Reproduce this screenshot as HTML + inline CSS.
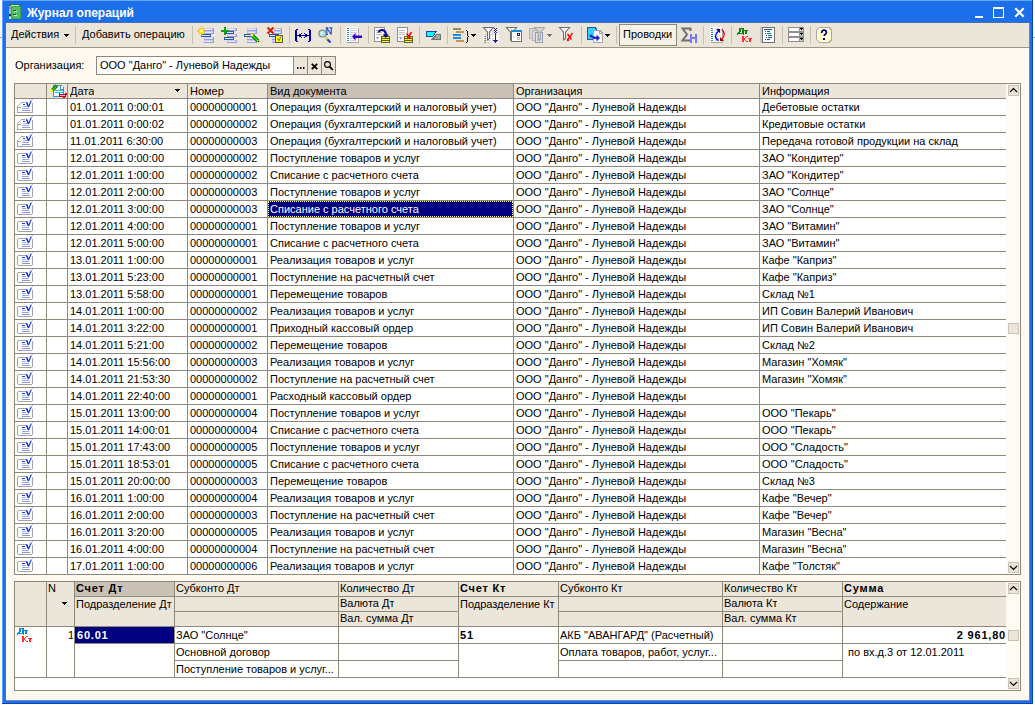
<!DOCTYPE html>
<html><head><meta charset="utf-8"><style>
html,body{margin:0;padding:0;}
body{width:1035px;height:705px;position:relative;overflow:hidden;background:#fdf9ee;font-family:"Liberation Sans", sans-serif;font-size:11px;color:#000;}
body>div,body>svg{position:absolute;}
.t{white-space:nowrap;overflow:hidden;}
.ic{width:16px;height:16px;}
</style></head><body>
<div style="left:2px;top:0px;width:1031px;height:704px;background:#1d6fe9;"></div>
<div style="left:3px;top:0px;width:1029px;height:1px;background:#62aaff;"></div>
<div style="left:2px;top:0px;width:1px;height:704px;background:#5aa0ff;"></div>
<div style="left:1032px;top:0px;width:1px;height:704px;background:#0a3fb5;"></div>
<div style="left:2px;top:703px;width:1031px;height:1px;background:#0a3fb5;"></div>
<div style="left:0px;top:37px;width:2px;height:1px;background:#a0a0a0;"></div>
<div style="left:1033px;top:37px;width:2px;height:1px;background:#a09a88;"></div>
<div style="left:5px;top:22px;width:1025px;height:679px;background:#fffaf0;"></div>
<div style="left:5px;top:22px;width:1025px;height:1px;background:#4a6fb0;"></div>
<div style="left:5px;top:22px;width:1px;height:679px;background:#4a6fb0;"></div>
<div style="left:1029px;top:23px;width:1px;height:678px;background:#6a88c8;"></div>
<div style="left:6px;top:700px;width:1024px;height:1px;background:#6a88c8;"></div>
<div style="left:6px;top:23px;width:1023px;height:24px;background:#ebe5da;"></div>
<div style="left:6px;top:47px;width:1023px;height:1px;background:#9c9684;"></div>
<div class="t" style="left:27px;top:5px;height:16px;line-height:16px;color:#fff;font-weight:bold;font-size:12px;">Журнал операций</div>
<div style="left:975px;top:16px;width:8px;height:2px;background:#ffffff;"></div>
<div style="left:993px;top:7px;width:11px;height:11px;background:transparent;box-sizing:border-box;border:1px solid #fff;border-top-width:2px;"></div>
<svg style="left:1014px;top:7px" width="12" height="12" viewBox="0 0 12 12" shape-rendering="crispEdges"><path d="M1.3 1.3l8.4 8.4M9.7 1.3l-8.4 8.4" stroke="#fff" stroke-width="2.1" shape-rendering="auto"/></svg>
<div class="t" style="left:11px;top:26px;height:16px;line-height:16px;">Действия</div>
<div class="t" style="left:82px;top:26px;height:16px;line-height:16px;">Добавить операцию</div>
<div style="left:75px;top:26px;width:1px;height:18px;background:#c5c1b0;"></div>
<div style="left:192px;top:26px;width:1px;height:18px;background:#c5c1b0;"></div>
<div style="left:289px;top:26px;width:1px;height:18px;background:#c5c1b0;"></div>
<div style="left:340px;top:26px;width:1px;height:18px;background:#c5c1b0;"></div>
<div style="left:368px;top:26px;width:1px;height:18px;background:#c5c1b0;"></div>
<div style="left:419px;top:26px;width:1px;height:18px;background:#c5c1b0;"></div>
<div style="left:447px;top:26px;width:1px;height:18px;background:#c5c1b0;"></div>
<div style="left:581px;top:26px;width:1px;height:18px;background:#c5c1b0;"></div>
<div style="left:616px;top:26px;width:1px;height:18px;background:#c5c1b0;"></div>
<div style="left:703px;top:26px;width:1px;height:18px;background:#c5c1b0;"></div>
<div style="left:731px;top:26px;width:1px;height:18px;background:#c5c1b0;"></div>
<div style="left:782px;top:26px;width:1px;height:18px;background:#c5c1b0;"></div>
<div style="left:810px;top:26px;width:1px;height:18px;background:#c5c1b0;"></div>
<svg style="left:64px;top:34px" width="5" height="3" viewBox="0 0 5 3" shape-rendering="crispEdges"><path d="M0 0h5v1h-1v1h-1v1h-1v-1h-1v-1h-1z" fill="#000"/></svg>
<svg style="left:471px;top:34px" width="5" height="3" viewBox="0 0 5 3" shape-rendering="crispEdges"><path d="M0 0h5v1h-1v1h-1v1h-1v-1h-1v-1h-1z" fill="#000"/></svg>
<svg style="left:547px;top:34px" width="5" height="3" viewBox="0 0 5 3" shape-rendering="crispEdges"><path d="M0 0h5v1h-1v1h-1v1h-1v-1h-1v-1h-1z" fill="#808080"/></svg>
<svg style="left:605px;top:34px" width="5" height="3" viewBox="0 0 5 3" shape-rendering="crispEdges"><path d="M0 0h5v1h-1v1h-1v1h-1v-1h-1v-1h-1z" fill="#000"/></svg>
<svg style="left:196px;top:25px" width="20" height="20" viewBox="0 0 20 20" shape-rendering="crispEdges"><rect x="8" y="3" width="10" height="3" fill="#9c9cd8"/><rect x="8" y="3" width="9" height="2" fill="#c8c8f8"/><rect x="9" y="4" width="7" height="1" fill="#ececff"/><rect x="8" y="6" width="10" height="3" fill="#9c9cd8"/><rect x="8" y="6" width="9" height="2" fill="#c8c8f8"/><rect x="9" y="7" width="7" height="1" fill="#ececff"/><rect x="5" y="9" width="10" height="3" fill="#2c5c9c"/><rect x="6" y="10" width="8" height="1" fill="#dde6f4"/><rect x="8" y="12" width="10" height="3" fill="#9c9cd8"/><rect x="8" y="12" width="9" height="2" fill="#c8c8f8"/><rect x="9" y="13" width="7" height="1" fill="#ececff"/><rect x="8" y="15" width="10" height="3" fill="#9c9cd8"/><rect x="8" y="15" width="9" height="2" fill="#c8c8f8"/><rect x="9" y="16" width="7" height="1" fill="#ececff"/><g shape-rendering="auto"><path d="M5.5 1.5v9M1 6h9M2.8 3.3l5.4 5.4M8.2 3.3l-5.4 5.4" stroke="#ffc000" stroke-width="1.4"/><circle cx="5.5" cy="6" r="2.6" fill="#ffe000"/><circle cx="5.5" cy="6" r="1.2" fill="#fff"/></g></svg>
<svg style="left:219px;top:25px" width="20" height="20" viewBox="0 0 20 20" shape-rendering="crispEdges"><rect x="8" y="3" width="10" height="3" fill="#9c9cd8"/><rect x="8" y="3" width="9" height="2" fill="#c8c8f8"/><rect x="9" y="4" width="7" height="1" fill="#ececff"/><rect x="7" y="6" width="8" height="3" fill="#2c5c9c"/><rect x="8" y="7" width="6" height="1" fill="#dde6f4"/><rect x="8" y="9" width="10" height="3" fill="#9c9cd8"/><rect x="8" y="9" width="9" height="2" fill="#c8c8f8"/><rect x="9" y="10" width="7" height="1" fill="#ececff"/><rect x="5" y="12" width="10" height="3" fill="#2c5c9c"/><rect x="6" y="13" width="8" height="1" fill="#dde6f4"/><rect x="8" y="15" width="10" height="3" fill="#9c9cd8"/><rect x="8" y="15" width="9" height="2" fill="#c8c8f8"/><rect x="9" y="16" width="7" height="1" fill="#ececff"/><rect x="5" y="2" width="2" height="8" fill="#10a010"/><rect x="2" y="5" width="8" height="2" fill="#10a010"/></svg>
<svg style="left:242px;top:25px" width="20" height="20" viewBox="0 0 20 20" shape-rendering="crispEdges"><rect x="5" y="3" width="10" height="3" fill="#9c9cd8"/><rect x="5" y="3" width="9" height="2" fill="#c8c8f8"/><rect x="6" y="4" width="7" height="1" fill="#ececff"/><rect x="5" y="6" width="10" height="3" fill="#9c9cd8"/><rect x="5" y="6" width="9" height="2" fill="#c8c8f8"/><rect x="6" y="7" width="7" height="1" fill="#ececff"/><rect x="2" y="9" width="8" height="3" fill="#2c5c9c"/><rect x="3" y="10" width="6" height="1" fill="#dde6f4"/><rect x="5" y="12" width="10" height="3" fill="#9c9cd8"/><rect x="5" y="12" width="9" height="2" fill="#c8c8f8"/><rect x="6" y="13" width="7" height="1" fill="#ececff"/><rect x="5" y="15" width="10" height="3" fill="#9c9cd8"/><rect x="5" y="15" width="9" height="2" fill="#c8c8f8"/><rect x="6" y="16" width="7" height="1" fill="#ececff"/><g shape-rendering="auto"><path d="M10 10L16.5 16.5" stroke="#006000" stroke-width="3.4"/><path d="M10 10L16.5 16.5" stroke="#20e020" stroke-width="1.6"/><circle cx="10" cy="10" r="1.5" fill="#ffff00"/><circle cx="16.5" cy="16.5" r="1.6" fill="#ffff00"/><circle cx="16.4" cy="16.4" r="0.7" fill="#000"/></g></svg>
<svg style="left:265px;top:25px" width="20" height="20" viewBox="0 0 20 20" shape-rendering="crispEdges"><rect x="9" y="3" width="8" height="3" fill="#9c9cd8"/><rect x="9" y="3" width="7" height="2" fill="#c8c8f8"/><rect x="10" y="4" width="5" height="1" fill="#ececff"/><rect x="9" y="6" width="8" height="3" fill="#9c9cd8"/><rect x="9" y="6" width="7" height="2" fill="#c8c8f8"/><rect x="10" y="7" width="5" height="1" fill="#ececff"/><rect x="4" y="9" width="10" height="3" fill="#2c5c9c"/><rect x="5" y="10" width="8" height="1" fill="#dde6f4"/><rect x="7" y="12" width="4" height="3" fill="#9c9cd8"/><rect x="7" y="12" width="3" height="2" fill="#c8c8f8"/><rect x="8" y="13" width="1" height="1" fill="#ececff"/><rect x="7" y="15" width="4" height="3" fill="#9c9cd8"/><rect x="7" y="15" width="3" height="2" fill="#c8c8f8"/><rect x="8" y="16" width="1" height="1" fill="#ececff"/><rect x="10" y="10" width="8" height="8" fill="#5c5c28"/><rect x="11" y="11" width="6" height="6" fill="#ffff00"/><g shape-rendering="auto"><path d="M12.5 13.5l1.5 2 2-4" stroke="#8c8c40" stroke-width="1.2" fill="none"/><path d="M2.5 2.5l6 6M8.5 2.5l-6 6" stroke="#d82000" stroke-width="2"/></g></svg>
<svg style="left:293px;top:25px" width="20" height="20" viewBox="0 0 20 20" shape-rendering="crispEdges"><g fill="#0000a0"><rect x="2" y="5" width="2" height="11" fill="#0000a0"/><rect x="3" y="4" width="2" height="1" fill="#0000a0"/><rect x="3" y="16" width="2" height="1" fill="#0000a0"/><rect x="16" y="5" width="2" height="11" fill="#0000a0"/><rect x="15" y="4" width="2" height="1" fill="#0000a0"/><rect x="15" y="16" width="2" height="1" fill="#0000a0"/><rect x="4" y="10" width="12" height="1" fill="#0000a0"/><rect x="6" y="9" width="2" height="3" fill="#0000a0"/><rect x="12" y="9" width="2" height="3" fill="#0000a0"/><rect x="8" y="8" width="1" height="1" fill="#0000a0"/><rect x="11" y="8" width="1" height="1" fill="#0000a0"/><rect x="8" y="12" width="1" height="1" fill="#0000a0"/><rect x="11" y="12" width="1" height="1" fill="#0000a0"/></g></svg>
<svg style="left:316px;top:25px" width="20" height="20" viewBox="0 0 20 20" shape-rendering="crispEdges"><g shape-rendering="auto"><path d="M9.5 2.8h3M13.5 2.8h3M10.8 3v6.5M15.2 3v6.5M10.8 3l4.4 6.5M9.5 9.5h2.6" stroke="#2050d0" stroke-width="1.2" fill="none"/><path d="M9.5 12.5l5 5" stroke="#c8c860" stroke-width="2"/><path d="M11.5 14.5l3 3" stroke="#2040c0" stroke-width="2"/><circle cx="6.5" cy="8.5" r="3.5" fill="#a8e8f0" stroke="#808080" stroke-width="1.2"/><circle cx="5.5" cy="8" r="1.2" fill="#f0f0f0"/></g></svg>
<svg style="left:344px;top:25px" width="20" height="20" viewBox="0 0 20 20" shape-rendering="crispEdges"><rect x="3" y="3" width="12" height="15" fill="#a8a8a8"/><rect x="2" y="2" width="12" height="15" fill="#ffffff"/><rect x="3" y="3" width="2" height="1" fill="#2090d0"/><rect x="6" y="3" width="7" height="1" fill="#d0d0d0"/><rect x="3" y="5" width="2" height="1" fill="#2090d0"/><rect x="6" y="5" width="7" height="1" fill="#d0d0d0"/><rect x="3" y="7" width="2" height="1" fill="#2090d0"/><rect x="6" y="7" width="7" height="1" fill="#d0d0d0"/><rect x="3" y="9" width="2" height="1" fill="#2090d0"/><rect x="6" y="9" width="7" height="1" fill="#d0d0d0"/><rect x="3" y="11" width="2" height="1" fill="#2090d0"/><rect x="6" y="11" width="7" height="1" fill="#d0d0d0"/><rect x="3" y="13" width="2" height="1" fill="#2090d0"/><rect x="6" y="13" width="7" height="1" fill="#d0d0d0"/><rect x="3" y="15" width="2" height="1" fill="#2090d0"/><rect x="6" y="15" width="7" height="1" fill="#d0d0d0"/><path d="M8 11.5L11.5 8v2.5h6.5v2.5h-6.5v2.5z" fill="#3000d0" shape-rendering="auto"/></svg>
<svg style="left:372px;top:25px" width="20" height="20" viewBox="0 0 20 20" shape-rendering="crispEdges"><rect x="2" y="2" width="11" height="15" fill="#909090"/><rect x="3" y="3" width="9" height="13" fill="#ffffff"/><rect x="4" y="5" width="6" height="1" fill="#c0c0c0"/><rect x="4" y="7" width="6" height="1" fill="#c0c0c0"/><rect x="4" y="9" width="6" height="1" fill="#c0c0c0"/><path d="M4 12h3l-1.5 2.5z" fill="#8888ff" shape-rendering="auto"/><rect x="9" y="11" width="9" height="7" fill="#606020"/><rect x="10" y="12" width="7" height="1" fill="#ffff20"/><rect x="10" y="14" width="7" height="1" fill="#ffff20"/><rect x="10" y="16" width="7" height="1" fill="#ffff20"/><g shape-rendering="auto"><path d="M6.5 7.5c1-3 6-4 7.5 1v2" stroke="#0000a0" stroke-width="1.8" fill="none"/><path d="M10.5 9.5h6.5l-3.25 3.5z" fill="#0000a0"/></g></svg>
<svg style="left:395px;top:25px" width="20" height="20" viewBox="0 0 20 20" shape-rendering="crispEdges"><rect x="2" y="2" width="11" height="15" fill="#909090"/><rect x="3" y="3" width="9" height="13" fill="#ffffff"/><rect x="4" y="5" width="6" height="1" fill="#c0c0c0"/><rect x="4" y="7" width="6" height="1" fill="#c0c0c0"/><rect x="4" y="9" width="6" height="1" fill="#c0c0c0"/><path d="M4 12h3l-1.5 2.5z" fill="#8888ff" shape-rendering="auto"/><rect x="9" y="11" width="9" height="7" fill="#606020"/><rect x="10" y="12" width="7" height="1" fill="#ffff20"/><rect x="10" y="14" width="7" height="1" fill="#ffff20"/><rect x="10" y="16" width="7" height="1" fill="#ffff20"/><g shape-rendering="auto"><path d="M11.5 8.5l4 5M16.5 7l-4.5 7" stroke="#ff0000" stroke-width="1.5" fill="none"/></g></svg>
<svg style="left:423px;top:25px" width="20" height="20" viewBox="0 0 20 20" shape-rendering="crispEdges"><path d="M3 6h11l-4 6h-7z" fill="#1c4c9c"/><path d="M4 7h8.3l-2.7 4h-5.6z" fill="#00ffff"/><path d="M13 9h5v6h-10z" fill="#707070"/><path d="M13.7 10h3.3v4h-6z" fill="#a8a8a8"/></svg>
<svg style="left:451px;top:25px" width="28" height="20" viewBox="0 0 28 20" shape-rendering="crispEdges"><rect x="2" y="3" width="8" height="2" fill="#8c9060"/><rect x="5" y="6" width="8" height="2" fill="#d09050"/><rect x="2" y="9" width="8" height="2" fill="#2090d8"/><rect x="2" y="12" width="8" height="2" fill="#2090d8"/><rect x="5" y="15" width="8" height="2" fill="#d09050"/><rect x="16" y="6" width="1" height="5" fill="#0000b0"/><rect x="16" y="12" width="1" height="5" fill="#0000b0"/><rect x="15" y="5" width="1" height="1" fill="#000"/><rect x="17" y="11" width="1" height="1" fill="#000"/><rect x="15" y="17" width="1" height="1" fill="#000"/><path d="M20 9h5v1h-1v1h-1v1h-1v-1h-1v-1h-1z" fill="#000"/></svg>
<svg style="left:481px;top:25px" width="20" height="20" viewBox="0 0 20 20" shape-rendering="crispEdges"><rect x="2" y="8" width="16" height="10" fill="#ffffff"/><rect x="2" y="9" width="15" height="1" fill="#d0d0d0"/><rect x="4" y="8" width="1" height="10" fill="#d8d8d8"/><rect x="11" y="8" width="1" height="10" fill="#d8d8d8"/><rect x="3" y="11" width="2" height="1" fill="#808080"/><rect x="6" y="11" width="4" height="1" fill="#d0d0d0"/><rect x="3" y="13" width="2" height="1" fill="#808080"/><rect x="6" y="13" width="4" height="1" fill="#d0d0d0"/><rect x="3" y="15" width="2" height="1" fill="#808080"/><rect x="6" y="15" width="4" height="1" fill="#d0d0d0"/><rect x="3" y="17" width="2" height="1" fill="#808080"/><rect x="6" y="17" width="4" height="1" fill="#d0d0d0"/><g shape-rendering="auto"><path d="M2.5 2.5h10l-4 4.5v6.5l-2 1.5v-8z" fill="#ffffff" stroke="#707070" stroke-width="1.1"/></g><rect x="13" y="3" width="1" height="1" fill="#2020a0"/><rect x="15" y="3" width="1" height="1" fill="#2020a0"/><rect x="14" y="4" width="1" height="1" fill="#2020a0"/><rect x="13" y="5" width="1" height="1" fill="#2020a0"/><rect x="15" y="5" width="1" height="1" fill="#2020a0"/><rect x="14" y="6" width="1" height="1" fill="#2020a0"/><rect x="13" y="7" width="1" height="1" fill="#2020a0"/><rect x="15" y="7" width="1" height="1" fill="#2020a0"/><rect x="14" y="8" width="1" height="8" fill="#2020a0"/><path d="M12 15h5l-2.5 3z" fill="#2020a0"/></svg>
<svg style="left:504px;top:25px" width="20" height="20" viewBox="0 0 20 20" shape-rendering="crispEdges"><g shape-rendering="auto"><path d="M2.5 2.5h10l-4 4.5v6.5l-2 1.5v-8z" fill="#ffffff" stroke="#707070" stroke-width="1.1"/></g><rect x="7" y="5" width="11" height="12" fill="#707070"/><rect x="8" y="7" width="9" height="9" fill="#ffffff"/><rect x="8" y="5" width="10" height="2" fill="#1890d0"/><rect x="13" y="8" width="3" height="3" fill="#1c1c90"/><rect x="14" y="9" width="1" height="1" fill="#fff"/><rect x="13" y="12" width="3" height="3" fill="#d0ccc0"/><rect x="14" y="13" width="1" height="1" fill="#fff"/><rect x="9" y="8" width="2" height="1" fill="#e0d8c8"/><rect x="9" y="12" width="2" height="1" fill="#e0d8c8"/></svg>
<svg style="left:527px;top:25px" width="28" height="20" viewBox="0 0 28 20" shape-rendering="crispEdges"><rect x="2" y="3" width="7" height="11" fill="#b0b0b0"/><rect x="3" y="4" width="5" height="9" fill="#d8d8d8"/><rect x="5" y="5" width="7" height="11" fill="#b8b8b8"/><rect x="6" y="6" width="5" height="9" fill="#dcdcdc"/><rect x="8" y="7" width="8" height="11" fill="#9898b8"/><rect x="9" y="8" width="6" height="9" fill="#e0e0e0"/><rect x="10" y="10" width="4" height="1" fill="#a0c8c0"/><rect x="10" y="12" width="4" height="1" fill="#a0c8c0"/><rect x="10" y="14" width="4" height="1" fill="#a0c8c0"/><rect x="10" y="15" width="4" height="1" fill="#a0c8c0"/><g shape-rendering="auto"><path d="M7.5 2.5h10l-4 4.5v6.5l-2 1.5v-8z" fill="#d8d8d8" stroke="#a8a8a8" stroke-width="1.1"/></g><path d="M20 9h5v1h-1v1h-1v1h-1v-1h-1v-1h-1z" fill="#707070"/></svg>
<svg style="left:557px;top:25px" width="20" height="20" viewBox="0 0 20 20" shape-rendering="crispEdges"><g shape-rendering="auto"><path d="M2.5 2.5h10l-4 4.5v6.5l-2 1.5v-8z" fill="#ffffff" stroke="#707070" stroke-width="1.1"/></g><g shape-rendering="auto"><path d="M10.5 9l4 5.5M15.5 8l-5 7" stroke="#ff0000" stroke-width="1.3"/><circle cx="11" cy="15" r="1.2" fill="#ff0000"/></g></svg>
<svg style="left:585px;top:25px" width="28" height="20" viewBox="0 0 28 20" shape-rendering="crispEdges"><path d="M2 2h8l2 2v11h-10z" fill="#1c5c9c"/><path d="M3 3h6.5l1.5 1.5v9.5h-8z" fill="#30d0f8"/><path d="M8 5h7l3 3v10h-10z" fill="#a8a8a8"/><path d="M9 6h5.5l2.5 2.5v8.5h-8z" fill="#ffffff"/><path d="M14.5 6v2.5h2.5" fill="none" stroke="#a8a8a8"/><g shape-rendering="auto"><path d="M5 10c1.5 2 3 3 7 3" stroke="#2020d0" stroke-width="2.2" fill="none"/><path d="M11.5 9.5l3.5 3.5-3.5 3.5z" fill="#2020d0"/></g><path d="M20 9h5v1h-1v1h-1v1h-1v-1h-1v-1h-1z" fill="#000"/></svg>
<svg style="left:680px;top:25px" width="20" height="20" viewBox="0 0 20 20" shape-rendering="crispEdges"><g shape-rendering="auto"><path d="M10.5 6v-2.5h-8l4.5 6-4.5 6h8" stroke="#707070" stroke-width="2" fill="none"/></g><rect x="10" y="9" width="2" height="9" fill="#7878ff"/><rect x="15" y="9" width="2" height="9" fill="#7878ff"/><rect x="12" y="12" width="3" height="2" fill="#7878ff"/></svg>
<svg style="left:708px;top:25px" width="20" height="20" viewBox="0 0 20 20" shape-rendering="crispEdges"><rect x="3" y="3" width="12" height="15" fill="#a8a8a8"/><rect x="2" y="2" width="12" height="15" fill="#ffffff"/><rect x="3" y="3" width="2" height="1" fill="#2090d0"/><rect x="6" y="3" width="7" height="1" fill="#e0e0e0"/><rect x="3" y="5" width="2" height="1" fill="#2090d0"/><rect x="6" y="5" width="7" height="1" fill="#e0e0e0"/><rect x="3" y="7" width="2" height="1" fill="#2090d0"/><rect x="6" y="7" width="7" height="1" fill="#e0e0e0"/><rect x="3" y="9" width="2" height="1" fill="#2090d0"/><rect x="6" y="9" width="7" height="1" fill="#e0e0e0"/><rect x="3" y="11" width="2" height="1" fill="#2090d0"/><rect x="6" y="11" width="7" height="1" fill="#e0e0e0"/><rect x="3" y="13" width="2" height="1" fill="#2090d0"/><rect x="6" y="13" width="7" height="1" fill="#e0e0e0"/><rect x="3" y="15" width="2" height="1" fill="#2090d0"/><rect x="6" y="15" width="7" height="1" fill="#e0e0e0"/><g shape-rendering="auto"><path d="M10.5 15.5c-4-2-4-6 0-9.5" stroke="#0000ff" stroke-width="1.4" fill="none"/><path d="M8 4h4v4z" fill="#000080"/><path d="M13.5 4.5c3.5 2 3.5 7 0 10" stroke="#ff0000" stroke-width="1.3" fill="none"/><path d="M12 12v4h4z" fill="#a00000"/></g></svg>
<svg style="left:734px;top:25px" width="20" height="20" viewBox="0 0 20 20" shape-rendering="crispEdges"><rect x="5" y="3" width="5" height="1" fill="#108010"/><rect x="5" y="3" width="2" height="4" fill="#108010"/><rect x="4" y="7" width="2" height="1" fill="#108010"/><rect x="8" y="3" width="2" height="5" fill="#108010"/><rect x="3" y="8" width="7" height="1" fill="#108010"/><rect x="3" y="9" width="1" height="1" fill="#108010"/><rect x="9" y="9" width="1" height="1" fill="#108010"/><rect x="10" y="5" width="4" height="1" fill="#108010"/><rect x="11" y="5" width="2" height="4" fill="#108010"/><rect x="8" y="11" width="2" height="6" fill="#ff3030"/><rect x="12" y="11" width="2" height="1" fill="#ff3030"/><rect x="11" y="12" width="1" height="1" fill="#ff3030"/><rect x="10" y="13" width="1" height="2" fill="#ff3030"/><rect x="11" y="15" width="1" height="1" fill="#ff3030"/><rect x="12" y="16" width="2" height="1" fill="#ff3030"/><rect x="14" y="13" width="4" height="1" fill="#ff3030"/><rect x="15" y="13" width="2" height="4" fill="#ff3030"/></svg>
<svg style="left:758px;top:25px" width="20" height="20" viewBox="0 0 20 20" shape-rendering="crispEdges"><rect x="2" y="2" width="2" height="16" fill="#c8c8c8"/><rect x="4" y="2" width="13" height="16" fill="#707070"/><rect x="5" y="3" width="11" height="14" fill="#ffffff"/><rect x="6" y="4" width="8" height="1" fill="#105c90"/><rect x="7" y="6" width="1" height="1" fill="#105c90"/><rect x="9" y="6" width="3" height="1" fill="#105c90"/><rect x="7" y="8" width="1" height="1" fill="#105c90"/><rect x="9" y="8" width="4" height="1" fill="#105c90"/><rect x="8" y="10" width="1" height="1" fill="#105c90"/><rect x="10" y="10" width="4" height="1" fill="#105c90"/><rect x="8" y="12" width="1" height="1" fill="#105c90"/><rect x="10" y="12" width="4" height="1" fill="#105c90"/><rect x="7" y="14" width="1" height="1" fill="#105c90"/><rect x="9" y="14" width="3" height="1" fill="#105c90"/></svg>
<svg style="left:786px;top:25px" width="20" height="20" viewBox="0 0 20 20" shape-rendering="crispEdges"><rect x="2" y="2" width="16" height="5" fill="#909090"/><rect x="3" y="3" width="10" height="3" fill="#ffffff"/><rect x="14" y="3" width="3" height="3" fill="#c8c8c8"/><rect x="14" y="3" width="3" height="1" fill="#000"/><rect x="15" y="4" width="1" height="1" fill="#000"/><rect x="2" y="7" width="16" height="5" fill="#909090"/><rect x="3" y="8" width="10" height="3" fill="#ffffff"/><rect x="14" y="8" width="3" height="3" fill="#c8c8c8"/><rect x="14" y="8" width="3" height="1" fill="#000"/><rect x="15" y="9" width="1" height="1" fill="#000"/><rect x="2" y="12" width="16" height="5" fill="#909090"/><rect x="3" y="13" width="10" height="3" fill="#ffffff"/><rect x="14" y="13" width="3" height="3" fill="#c8c8c8"/><rect x="14" y="13" width="3" height="1" fill="#000"/><rect x="15" y="14" width="1" height="1" fill="#000"/></svg>
<svg style="left:814px;top:25px" width="20" height="20" viewBox="0 0 20 20" shape-rendering="crispEdges"><path d="M5 2h10l3 3v10l-3 3h-10l-3-3v-10z" fill="#a8a8a8"/><path d="M5.5 3h9l2.5 2.5v9l-2.5 2.5h-9l-2.5-2.5v-9z" fill="#ffffd0"/><g shape-rendering="auto"><path d="M7.6 8c0-2 1-2.8 2.4-2.8s2.4 0.8 2.4 2.2c0 1.6-2.2 1.8-2.2 3.6" stroke="#000090" stroke-width="1.7" fill="none"/></g><rect x="9" y="13" width="2" height="2" fill="#000090"/></svg>
<svg style="left:6px;top:2px" width="18" height="18" viewBox="0 0 18 18" shape-rendering="crispEdges"><rect x="3" y="2" width="11" height="15" fill="#1c7a34"/><rect x="5" y="3" width="8" height="1" fill="#c8ecc8"/><rect x="5" y="4" width="10" height="13" fill="#3aa650"/><rect x="6" y="5" width="8" height="11" fill="#52c068"/><rect x="3" y="4" width="2" height="13" fill="#8cc8a0"/><rect x="3" y="5" width="2" height="2" fill="#c08050"/><rect x="3" y="12" width="2" height="2" fill="#103c18"/><rect x="3" y="15" width="2" height="2" fill="#d8f0c8"/><rect x="7" y="8" width="3" height="1" fill="#1c5c2c"/><rect x="8" y="9" width="3" height="1" fill="#d8f8d8"/><rect x="7" y="12" width="3" height="1" fill="#1c5c2c"/><rect x="8" y="13" width="3" height="1" fill="#d8f8d8"/></svg>
<div style="left:619px;top:24px;width:58px;height:22px;background:#f5f2e8;box-sizing:border-box;border:1px solid #8f8a78;"></div>
<div class="t" style="left:623px;top:26px;height:16px;line-height:16px;">Проводки</div>
<div class="t" style="left:15px;top:57px;height:16px;line-height:16px;">Организация:</div>
<div style="left:96px;top:56px;width:240px;height:19px;background:#ffffff;box-sizing:border-box;border:1px solid #8f8a78;"></div>
<div class="t" style="left:100px;top:57px;height:16px;line-height:16px;">ООО &quot;Данго&quot; - Луневой Надежды</div>
<div style="left:293px;top:56px;width:15px;height:19px;background:#ebe5da;box-sizing:border-box;border:1px solid #8f8a78;"></div>
<div style="left:307px;top:56px;width:15px;height:19px;background:#ebe5da;box-sizing:border-box;border:1px solid #8f8a78;"></div>
<div style="left:321px;top:56px;width:15px;height:19px;background:#ebe5da;box-sizing:border-box;border:1px solid #8f8a78;"></div>
<div style="left:297px;top:67px;width:1px;height:2px;background:#000;"></div>
<div style="left:300px;top:67px;width:1px;height:2px;background:#000;"></div>
<div style="left:303px;top:67px;width:1px;height:2px;background:#000;"></div>
<div style="left:298px;top:67px;width:1px;height:2px;background:#888;"></div>
<div style="left:301px;top:67px;width:1px;height:2px;background:#888;"></div>
<div style="left:304px;top:67px;width:1px;height:2px;background:#888;"></div>
<svg style="left:307px;top:56px" width="14" height="19" viewBox="0 0 14 19" shape-rendering="crispEdges"><path d="M4.8 7.8l5.4 5.4M10.2 7.8l-5.4 5.4" stroke="#000" stroke-width="1.9" shape-rendering="auto"/></svg>
<svg style="left:321px;top:56px" width="15" height="19" viewBox="0 0 15 19" shape-rendering="crispEdges"><g shape-rendering="auto"><circle cx="6.5" cy="8.5" r="2.9" fill="none" stroke="#000" stroke-width="1.1"/><path d="M8.6 10.6l3.2 3.2" stroke="#000" stroke-width="1.9"/></g></svg>
<div style="left:14px;top:83px;width:1007px;height:492px;background:#ffffff;"></div>
<div style="left:15px;top:84px;width:991px;height:14px;background:#ebe5da;"></div>
<div style="left:268px;top:84px;width:245px;height:14px;background:#c9c1b5;"></div>
<div style="left:1006px;top:84px;width:14px;height:490px;background:#fdfbf3;"></div>
<div style="left:14px;top:98px;width:992px;height:1px;background:#8f897b;"></div>
<div style="left:14px;top:115px;width:992px;height:1px;background:#8f897b;"></div>
<div style="left:14px;top:132px;width:992px;height:1px;background:#8f897b;"></div>
<div style="left:14px;top:149px;width:992px;height:1px;background:#8f897b;"></div>
<div style="left:14px;top:166px;width:992px;height:1px;background:#8f897b;"></div>
<div style="left:14px;top:183px;width:992px;height:1px;background:#8f897b;"></div>
<div style="left:14px;top:200px;width:992px;height:1px;background:#8f897b;"></div>
<div style="left:14px;top:217px;width:992px;height:1px;background:#8f897b;"></div>
<div style="left:14px;top:234px;width:992px;height:1px;background:#8f897b;"></div>
<div style="left:14px;top:251px;width:992px;height:1px;background:#8f897b;"></div>
<div style="left:14px;top:268px;width:992px;height:1px;background:#8f897b;"></div>
<div style="left:14px;top:285px;width:992px;height:1px;background:#8f897b;"></div>
<div style="left:14px;top:302px;width:992px;height:1px;background:#8f897b;"></div>
<div style="left:14px;top:319px;width:992px;height:1px;background:#8f897b;"></div>
<div style="left:14px;top:336px;width:992px;height:1px;background:#8f897b;"></div>
<div style="left:14px;top:353px;width:992px;height:1px;background:#8f897b;"></div>
<div style="left:14px;top:370px;width:992px;height:1px;background:#8f897b;"></div>
<div style="left:14px;top:387px;width:992px;height:1px;background:#8f897b;"></div>
<div style="left:14px;top:404px;width:992px;height:1px;background:#8f897b;"></div>
<div style="left:14px;top:421px;width:992px;height:1px;background:#8f897b;"></div>
<div style="left:14px;top:438px;width:992px;height:1px;background:#8f897b;"></div>
<div style="left:14px;top:455px;width:992px;height:1px;background:#8f897b;"></div>
<div style="left:14px;top:472px;width:992px;height:1px;background:#8f897b;"></div>
<div style="left:14px;top:489px;width:992px;height:1px;background:#8f897b;"></div>
<div style="left:14px;top:506px;width:992px;height:1px;background:#8f897b;"></div>
<div style="left:14px;top:523px;width:992px;height:1px;background:#8f897b;"></div>
<div style="left:14px;top:540px;width:992px;height:1px;background:#8f897b;"></div>
<div style="left:14px;top:557px;width:992px;height:1px;background:#8f897b;"></div>
<div style="left:46px;top:84px;width:1px;height:490px;background:#8f897b;"></div>
<div style="left:67px;top:84px;width:1px;height:490px;background:#8f897b;"></div>
<div style="left:187px;top:84px;width:1px;height:490px;background:#8f897b;"></div>
<div style="left:267px;top:84px;width:1px;height:490px;background:#8f897b;"></div>
<div style="left:513px;top:84px;width:1px;height:490px;background:#8f897b;"></div>
<div style="left:759px;top:84px;width:1px;height:490px;background:#8f897b;"></div>
<div style="left:14px;top:83px;width:1007px;height:1px;background:#8f897b;"></div>
<div style="left:14px;top:574px;width:1007px;height:1px;background:#8f897b;"></div>
<div style="left:14px;top:83px;width:1px;height:492px;background:#8f897b;"></div>
<div style="left:1020px;top:83px;width:1px;height:492px;background:#8f897b;"></div>
<svg style="left:46px;top:83px" width="22" height="16" viewBox="0 0 22 16" shape-rendering="crispEdges"><path d="M7 2h8l3 3v9h-11z" fill="#3890d0"/><path d="M8 3h6.5l2.5 2.5v7.5h-9z" fill="#ffffff"/><path d="M14 2v4h4" fill="none" stroke="#3890d0"/><rect x="15" y="3" width="2" height="2" fill="#ffffff"/><rect x="9" y="7" width="8" height="1" fill="#10c8f8"/><rect x="9" y="9" width="8" height="1" fill="#10c8f8"/><g shape-rendering="auto"><path d="M6 7.5L11 2.5" stroke="#108010" stroke-width="3.4"/><path d="M6.5 7L10.5 3" stroke="#70e070" stroke-width="0.9"/><path d="M3.5 9.5l1.5-4 2.5 2.5z" fill="#f0f000"/></g><rect x="13" y="11" width="7" height="3" fill="#d00000"/><rect x="14" y="12" width="5" height="1" fill="#ffb0e8"/><rect x="13" y="10" width="1" height="1" fill="#d00000"/><rect x="19" y="10" width="2" height="2" fill="#d00000"/><rect x="17" y="14" width="2" height="1" fill="#d00000"/></svg>
<div class="t" style="left:70px;top:83px;height:16px;line-height:16px;">Дата</div>
<svg style="left:175px;top:89px" width="5" height="3" viewBox="0 0 5 3" shape-rendering="crispEdges"><path d="M0 0h5v1h-1v1h-1v1h-1v-1h-1v-1h-1z" fill="#000"/></svg>
<div class="t" style="left:190px;top:83px;height:16px;line-height:16px;">Номер</div>
<div class="t" style="left:270px;top:83px;height:16px;line-height:16px;">Вид документа</div>
<div class="t" style="left:516px;top:83px;height:16px;line-height:16px;">Организация</div>
<div class="t" style="left:762px;top:83px;height:16px;line-height:16px;">Информация</div>
<svg style="left:15px;top:99px" width="20" height="16" viewBox="0 0 20 16" shape-rendering="crispEdges"><g fill="none" stroke-width="1"><path d="M6 3.5h4M2.5 7v6.5h15v-9.5M2 8.5h4" stroke="#a4a4a4"/><path d="M2.5 7.5L6.5 3.5" stroke="#b4b4b4" shape-rendering="auto"/><rect x="8" y="5" width="2" height="1" fill="#1838e0"/><rect x="8" y="7" width="4" height="1" fill="#98a8e8"/><rect x="7" y="9" width="7" height="1" fill="#98a8e8"/><rect x="7" y="11" width="8" height="1" fill="#8898e0"/><path d="M11.5 3.3L13.5 8" stroke="#0028e0" stroke-width="1.5" shape-rendering="auto"/><path d="M13.5 8L16.2 1.8" stroke="#1030e0" stroke-width="1.1" shape-rendering="auto"/><path d="M16.2 1.8L17.8 0" stroke="#a8a8ff" shape-rendering="auto"/></g></svg>
<div class="t" style="left:70px;top:99px;width:116px;height:16px;line-height:16px;">01.01.2011 0:00:01</div>
<div class="t" style="left:190px;top:99px;width:76px;height:16px;line-height:16px;">00000000001</div>
<div class="t" style="left:270px;top:99px;width:242px;height:16px;line-height:16px;">Операция (бухгалтерский и налоговый учет)</div>
<div class="t" style="left:516px;top:99px;width:242px;height:16px;line-height:16px;">ООО &quot;Данго&quot; - Луневой Надежды</div>
<div class="t" style="left:762px;top:99px;width:243px;height:16px;line-height:16px;">Дебетовые остатки</div>
<svg style="left:15px;top:116px" width="20" height="16" viewBox="0 0 20 16" shape-rendering="crispEdges"><g fill="none" stroke-width="1"><path d="M6 3.5h4M2.5 7v6.5h15v-9.5M2 8.5h4" stroke="#a4a4a4"/><path d="M2.5 7.5L6.5 3.5" stroke="#b4b4b4" shape-rendering="auto"/><rect x="8" y="5" width="2" height="1" fill="#1838e0"/><rect x="8" y="7" width="4" height="1" fill="#98a8e8"/><rect x="7" y="9" width="7" height="1" fill="#98a8e8"/><rect x="7" y="11" width="8" height="1" fill="#8898e0"/><path d="M11.5 3.3L13.5 8" stroke="#0028e0" stroke-width="1.5" shape-rendering="auto"/><path d="M13.5 8L16.2 1.8" stroke="#1030e0" stroke-width="1.1" shape-rendering="auto"/><path d="M16.2 1.8L17.8 0" stroke="#a8a8ff" shape-rendering="auto"/></g></svg>
<div class="t" style="left:70px;top:116px;width:116px;height:16px;line-height:16px;">01.01.2011 0:00:02</div>
<div class="t" style="left:190px;top:116px;width:76px;height:16px;line-height:16px;">00000000002</div>
<div class="t" style="left:270px;top:116px;width:242px;height:16px;line-height:16px;">Операция (бухгалтерский и налоговый учет)</div>
<div class="t" style="left:516px;top:116px;width:242px;height:16px;line-height:16px;">ООО &quot;Данго&quot; - Луневой Надежды</div>
<div class="t" style="left:762px;top:116px;width:243px;height:16px;line-height:16px;">Кредитовые остатки</div>
<svg style="left:15px;top:133px" width="20" height="16" viewBox="0 0 20 16" shape-rendering="crispEdges"><g fill="none" stroke-width="1"><path d="M6 3.5h4M2.5 7v6.5h15v-9.5M2 8.5h4" stroke="#a4a4a4"/><path d="M2.5 7.5L6.5 3.5" stroke="#b4b4b4" shape-rendering="auto"/><rect x="8" y="5" width="2" height="1" fill="#1838e0"/><rect x="8" y="7" width="4" height="1" fill="#98a8e8"/><rect x="7" y="9" width="7" height="1" fill="#98a8e8"/><rect x="7" y="11" width="8" height="1" fill="#8898e0"/><path d="M11.5 3.3L13.5 8" stroke="#0028e0" stroke-width="1.5" shape-rendering="auto"/><path d="M13.5 8L16.2 1.8" stroke="#1030e0" stroke-width="1.1" shape-rendering="auto"/><path d="M16.2 1.8L17.8 0" stroke="#a8a8ff" shape-rendering="auto"/></g></svg>
<div class="t" style="left:70px;top:133px;width:116px;height:16px;line-height:16px;">11.01.2011 6:30:00</div>
<div class="t" style="left:190px;top:133px;width:76px;height:16px;line-height:16px;">00000000003</div>
<div class="t" style="left:270px;top:133px;width:242px;height:16px;line-height:16px;">Операция (бухгалтерский и налоговый учет)</div>
<div class="t" style="left:516px;top:133px;width:242px;height:16px;line-height:16px;">ООО &quot;Данго&quot; - Луневой Надежды</div>
<div class="t" style="left:762px;top:133px;width:243px;height:16px;line-height:16px;">Передача готовой продукции на склад</div>
<svg style="left:15px;top:150px" width="20" height="16" viewBox="0 0 20 16" shape-rendering="crispEdges"><g fill="none" stroke-width="1"><path d="M3 3.5h8M2.5 4v9M3 13.5h14M17.5 4v9" stroke="#a4a4a4"/><rect x="7" y="5" width="3" height="1" fill="#1838e0"/><rect x="7" y="7" width="4" height="1" fill="#98a8e8"/><rect x="7" y="9" width="7" height="1" fill="#98a8e8"/><rect x="7" y="11" width="8" height="1" fill="#8898e0"/><path d="M11.5 3.3L13.5 8" stroke="#0028e0" stroke-width="1.5" shape-rendering="auto"/><path d="M13.5 8L16.2 1.8" stroke="#1030e0" stroke-width="1.1" shape-rendering="auto"/><path d="M16.2 1.8L17.8 0" stroke="#a8a8ff" shape-rendering="auto"/></g></svg>
<div class="t" style="left:70px;top:150px;width:116px;height:16px;line-height:16px;">12.01.2011 0:00:00</div>
<div class="t" style="left:190px;top:150px;width:76px;height:16px;line-height:16px;">00000000002</div>
<div class="t" style="left:270px;top:150px;width:242px;height:16px;line-height:16px;">Поступление товаров и услуг</div>
<div class="t" style="left:516px;top:150px;width:242px;height:16px;line-height:16px;">ООО &quot;Данго&quot; - Луневой Надежды</div>
<div class="t" style="left:762px;top:150px;width:243px;height:16px;line-height:16px;">ЗАО &quot;Кондитер&quot;</div>
<svg style="left:15px;top:167px" width="20" height="16" viewBox="0 0 20 16" shape-rendering="crispEdges"><g fill="none" stroke-width="1"><path d="M3 3.5h8M2.5 4v9M3 13.5h14M17.5 4v9" stroke="#a4a4a4"/><rect x="7" y="5" width="3" height="1" fill="#1838e0"/><rect x="7" y="7" width="4" height="1" fill="#98a8e8"/><rect x="7" y="9" width="7" height="1" fill="#98a8e8"/><rect x="7" y="11" width="8" height="1" fill="#8898e0"/><path d="M11.5 3.3L13.5 8" stroke="#0028e0" stroke-width="1.5" shape-rendering="auto"/><path d="M13.5 8L16.2 1.8" stroke="#1030e0" stroke-width="1.1" shape-rendering="auto"/><path d="M16.2 1.8L17.8 0" stroke="#a8a8ff" shape-rendering="auto"/></g></svg>
<div class="t" style="left:70px;top:167px;width:116px;height:16px;line-height:16px;">12.01.2011 1:00:00</div>
<div class="t" style="left:190px;top:167px;width:76px;height:16px;line-height:16px;">00000000002</div>
<div class="t" style="left:270px;top:167px;width:242px;height:16px;line-height:16px;">Списание с расчетного счета</div>
<div class="t" style="left:516px;top:167px;width:242px;height:16px;line-height:16px;">ООО &quot;Данго&quot; - Луневой Надежды</div>
<div class="t" style="left:762px;top:167px;width:243px;height:16px;line-height:16px;">ЗАО &quot;Кондитер&quot;</div>
<svg style="left:15px;top:184px" width="20" height="16" viewBox="0 0 20 16" shape-rendering="crispEdges"><g fill="none" stroke-width="1"><path d="M3 3.5h8M2.5 4v9M3 13.5h14M17.5 4v9" stroke="#a4a4a4"/><rect x="7" y="5" width="3" height="1" fill="#1838e0"/><rect x="7" y="7" width="4" height="1" fill="#98a8e8"/><rect x="7" y="9" width="7" height="1" fill="#98a8e8"/><rect x="7" y="11" width="8" height="1" fill="#8898e0"/><path d="M11.5 3.3L13.5 8" stroke="#0028e0" stroke-width="1.5" shape-rendering="auto"/><path d="M13.5 8L16.2 1.8" stroke="#1030e0" stroke-width="1.1" shape-rendering="auto"/><path d="M16.2 1.8L17.8 0" stroke="#a8a8ff" shape-rendering="auto"/></g></svg>
<div class="t" style="left:70px;top:184px;width:116px;height:16px;line-height:16px;">12.01.2011 2:00:00</div>
<div class="t" style="left:190px;top:184px;width:76px;height:16px;line-height:16px;">00000000003</div>
<div class="t" style="left:270px;top:184px;width:242px;height:16px;line-height:16px;">Поступление товаров и услуг</div>
<div class="t" style="left:516px;top:184px;width:242px;height:16px;line-height:16px;">ООО &quot;Данго&quot; - Луневой Надежды</div>
<div class="t" style="left:762px;top:184px;width:243px;height:16px;line-height:16px;">ЗАО &quot;Солнце&quot;</div>
<div style="left:268px;top:201px;width:245px;height:16px;background:#000080;"></div>
<div style="left:268px;top:201px;width:245px;height:16px;box-sizing:border-box;border:1px dotted #ffff80;"></div>
<svg style="left:15px;top:201px" width="20" height="16" viewBox="0 0 20 16" shape-rendering="crispEdges"><g fill="none" stroke-width="1"><path d="M3 3.5h8M2.5 4v9M3 13.5h14M17.5 4v9" stroke="#a4a4a4"/><rect x="7" y="5" width="3" height="1" fill="#1838e0"/><rect x="7" y="7" width="4" height="1" fill="#98a8e8"/><rect x="7" y="9" width="7" height="1" fill="#98a8e8"/><rect x="7" y="11" width="8" height="1" fill="#8898e0"/><path d="M11.5 3.3L13.5 8" stroke="#0028e0" stroke-width="1.5" shape-rendering="auto"/><path d="M13.5 8L16.2 1.8" stroke="#1030e0" stroke-width="1.1" shape-rendering="auto"/><path d="M16.2 1.8L17.8 0" stroke="#a8a8ff" shape-rendering="auto"/></g></svg>
<div class="t" style="left:70px;top:201px;width:116px;height:16px;line-height:16px;">12.01.2011 3:00:00</div>
<div class="t" style="left:190px;top:201px;width:76px;height:16px;line-height:16px;">00000000003</div>
<div class="t" style="left:270px;top:201px;width:242px;height:16px;line-height:16px;color:#fff;">Списание с расчетного счета</div>
<div class="t" style="left:516px;top:201px;width:242px;height:16px;line-height:16px;">ООО &quot;Данго&quot; - Луневой Надежды</div>
<div class="t" style="left:762px;top:201px;width:243px;height:16px;line-height:16px;">ЗАО &quot;Солнце&quot;</div>
<svg style="left:15px;top:218px" width="20" height="16" viewBox="0 0 20 16" shape-rendering="crispEdges"><g fill="none" stroke-width="1"><path d="M3 3.5h8M2.5 4v9M3 13.5h14M17.5 4v9" stroke="#a4a4a4"/><rect x="7" y="5" width="3" height="1" fill="#1838e0"/><rect x="7" y="7" width="4" height="1" fill="#98a8e8"/><rect x="7" y="9" width="7" height="1" fill="#98a8e8"/><rect x="7" y="11" width="8" height="1" fill="#8898e0"/><path d="M11.5 3.3L13.5 8" stroke="#0028e0" stroke-width="1.5" shape-rendering="auto"/><path d="M13.5 8L16.2 1.8" stroke="#1030e0" stroke-width="1.1" shape-rendering="auto"/><path d="M16.2 1.8L17.8 0" stroke="#a8a8ff" shape-rendering="auto"/></g></svg>
<div class="t" style="left:70px;top:218px;width:116px;height:16px;line-height:16px;">12.01.2011 4:00:00</div>
<div class="t" style="left:190px;top:218px;width:76px;height:16px;line-height:16px;">00000000001</div>
<div class="t" style="left:270px;top:218px;width:242px;height:16px;line-height:16px;">Поступление товаров и услуг</div>
<div class="t" style="left:516px;top:218px;width:242px;height:16px;line-height:16px;">ООО &quot;Данго&quot; - Луневой Надежды</div>
<div class="t" style="left:762px;top:218px;width:243px;height:16px;line-height:16px;">ЗАО &quot;Витамин&quot;</div>
<svg style="left:15px;top:235px" width="20" height="16" viewBox="0 0 20 16" shape-rendering="crispEdges"><g fill="none" stroke-width="1"><path d="M3 3.5h8M2.5 4v9M3 13.5h14M17.5 4v9" stroke="#a4a4a4"/><rect x="7" y="5" width="3" height="1" fill="#1838e0"/><rect x="7" y="7" width="4" height="1" fill="#98a8e8"/><rect x="7" y="9" width="7" height="1" fill="#98a8e8"/><rect x="7" y="11" width="8" height="1" fill="#8898e0"/><path d="M11.5 3.3L13.5 8" stroke="#0028e0" stroke-width="1.5" shape-rendering="auto"/><path d="M13.5 8L16.2 1.8" stroke="#1030e0" stroke-width="1.1" shape-rendering="auto"/><path d="M16.2 1.8L17.8 0" stroke="#a8a8ff" shape-rendering="auto"/></g></svg>
<div class="t" style="left:70px;top:235px;width:116px;height:16px;line-height:16px;">12.01.2011 5:00:00</div>
<div class="t" style="left:190px;top:235px;width:76px;height:16px;line-height:16px;">00000000001</div>
<div class="t" style="left:270px;top:235px;width:242px;height:16px;line-height:16px;">Списание с расчетного счета</div>
<div class="t" style="left:516px;top:235px;width:242px;height:16px;line-height:16px;">ООО &quot;Данго&quot; - Луневой Надежды</div>
<div class="t" style="left:762px;top:235px;width:243px;height:16px;line-height:16px;">ЗАО &quot;Витамин&quot;</div>
<svg style="left:15px;top:252px" width="20" height="16" viewBox="0 0 20 16" shape-rendering="crispEdges"><g fill="none" stroke-width="1"><path d="M3 3.5h8M2.5 4v9M3 13.5h14M17.5 4v9" stroke="#a4a4a4"/><rect x="7" y="5" width="3" height="1" fill="#1838e0"/><rect x="7" y="7" width="4" height="1" fill="#98a8e8"/><rect x="7" y="9" width="7" height="1" fill="#98a8e8"/><rect x="7" y="11" width="8" height="1" fill="#8898e0"/><path d="M11.5 3.3L13.5 8" stroke="#0028e0" stroke-width="1.5" shape-rendering="auto"/><path d="M13.5 8L16.2 1.8" stroke="#1030e0" stroke-width="1.1" shape-rendering="auto"/><path d="M16.2 1.8L17.8 0" stroke="#a8a8ff" shape-rendering="auto"/></g></svg>
<div class="t" style="left:70px;top:252px;width:116px;height:16px;line-height:16px;">13.01.2011 1:00:00</div>
<div class="t" style="left:190px;top:252px;width:76px;height:16px;line-height:16px;">00000000001</div>
<div class="t" style="left:270px;top:252px;width:242px;height:16px;line-height:16px;">Реализация товаров и услуг</div>
<div class="t" style="left:516px;top:252px;width:242px;height:16px;line-height:16px;">ООО &quot;Данго&quot; - Луневой Надежды</div>
<div class="t" style="left:762px;top:252px;width:243px;height:16px;line-height:16px;">Кафе &quot;Каприз&quot;</div>
<svg style="left:15px;top:269px" width="20" height="16" viewBox="0 0 20 16" shape-rendering="crispEdges"><g fill="none" stroke-width="1"><path d="M3 3.5h8M2.5 4v9M3 13.5h14M17.5 4v9" stroke="#a4a4a4"/><rect x="7" y="5" width="3" height="1" fill="#1838e0"/><rect x="7" y="7" width="4" height="1" fill="#98a8e8"/><rect x="7" y="9" width="7" height="1" fill="#98a8e8"/><rect x="7" y="11" width="8" height="1" fill="#8898e0"/><path d="M11.5 3.3L13.5 8" stroke="#0028e0" stroke-width="1.5" shape-rendering="auto"/><path d="M13.5 8L16.2 1.8" stroke="#1030e0" stroke-width="1.1" shape-rendering="auto"/><path d="M16.2 1.8L17.8 0" stroke="#a8a8ff" shape-rendering="auto"/></g></svg>
<div class="t" style="left:70px;top:269px;width:116px;height:16px;line-height:16px;">13.01.2011 5:23:00</div>
<div class="t" style="left:190px;top:269px;width:76px;height:16px;line-height:16px;">00000000001</div>
<div class="t" style="left:270px;top:269px;width:242px;height:16px;line-height:16px;">Поступление на расчетный счет</div>
<div class="t" style="left:516px;top:269px;width:242px;height:16px;line-height:16px;">ООО &quot;Данго&quot; - Луневой Надежды</div>
<div class="t" style="left:762px;top:269px;width:243px;height:16px;line-height:16px;">Кафе &quot;Каприз&quot;</div>
<svg style="left:15px;top:286px" width="20" height="16" viewBox="0 0 20 16" shape-rendering="crispEdges"><g fill="none" stroke-width="1"><path d="M3 3.5h8M2.5 4v9M3 13.5h14M17.5 4v9" stroke="#a4a4a4"/><rect x="7" y="5" width="3" height="1" fill="#1838e0"/><rect x="7" y="7" width="4" height="1" fill="#98a8e8"/><rect x="7" y="9" width="7" height="1" fill="#98a8e8"/><rect x="7" y="11" width="8" height="1" fill="#8898e0"/><path d="M11.5 3.3L13.5 8" stroke="#0028e0" stroke-width="1.5" shape-rendering="auto"/><path d="M13.5 8L16.2 1.8" stroke="#1030e0" stroke-width="1.1" shape-rendering="auto"/><path d="M16.2 1.8L17.8 0" stroke="#a8a8ff" shape-rendering="auto"/></g></svg>
<div class="t" style="left:70px;top:286px;width:116px;height:16px;line-height:16px;">13.01.2011 5:58:00</div>
<div class="t" style="left:190px;top:286px;width:76px;height:16px;line-height:16px;">00000000001</div>
<div class="t" style="left:270px;top:286px;width:242px;height:16px;line-height:16px;">Перемещение товаров</div>
<div class="t" style="left:516px;top:286px;width:242px;height:16px;line-height:16px;">ООО &quot;Данго&quot; - Луневой Надежды</div>
<div class="t" style="left:762px;top:286px;width:243px;height:16px;line-height:16px;">Склад №1</div>
<svg style="left:15px;top:303px" width="20" height="16" viewBox="0 0 20 16" shape-rendering="crispEdges"><g fill="none" stroke-width="1"><path d="M3 3.5h8M2.5 4v9M3 13.5h14M17.5 4v9" stroke="#a4a4a4"/><rect x="7" y="5" width="3" height="1" fill="#1838e0"/><rect x="7" y="7" width="4" height="1" fill="#98a8e8"/><rect x="7" y="9" width="7" height="1" fill="#98a8e8"/><rect x="7" y="11" width="8" height="1" fill="#8898e0"/><path d="M11.5 3.3L13.5 8" stroke="#0028e0" stroke-width="1.5" shape-rendering="auto"/><path d="M13.5 8L16.2 1.8" stroke="#1030e0" stroke-width="1.1" shape-rendering="auto"/><path d="M16.2 1.8L17.8 0" stroke="#a8a8ff" shape-rendering="auto"/></g></svg>
<div class="t" style="left:70px;top:303px;width:116px;height:16px;line-height:16px;">14.01.2011 1:00:00</div>
<div class="t" style="left:190px;top:303px;width:76px;height:16px;line-height:16px;">00000000002</div>
<div class="t" style="left:270px;top:303px;width:242px;height:16px;line-height:16px;">Реализация товаров и услуг</div>
<div class="t" style="left:516px;top:303px;width:242px;height:16px;line-height:16px;">ООО &quot;Данго&quot; - Луневой Надежды</div>
<div class="t" style="left:762px;top:303px;width:243px;height:16px;line-height:16px;">ИП Совин Валерий Иванович</div>
<svg style="left:15px;top:320px" width="20" height="16" viewBox="0 0 20 16" shape-rendering="crispEdges"><g fill="none" stroke-width="1"><path d="M3 3.5h8M2.5 4v9M3 13.5h14M17.5 4v9" stroke="#a4a4a4"/><rect x="7" y="5" width="3" height="1" fill="#1838e0"/><rect x="7" y="7" width="4" height="1" fill="#98a8e8"/><rect x="7" y="9" width="7" height="1" fill="#98a8e8"/><rect x="7" y="11" width="8" height="1" fill="#8898e0"/><path d="M11.5 3.3L13.5 8" stroke="#0028e0" stroke-width="1.5" shape-rendering="auto"/><path d="M13.5 8L16.2 1.8" stroke="#1030e0" stroke-width="1.1" shape-rendering="auto"/><path d="M16.2 1.8L17.8 0" stroke="#a8a8ff" shape-rendering="auto"/></g></svg>
<div class="t" style="left:70px;top:320px;width:116px;height:16px;line-height:16px;">14.01.2011 3:22:00</div>
<div class="t" style="left:190px;top:320px;width:76px;height:16px;line-height:16px;">00000000001</div>
<div class="t" style="left:270px;top:320px;width:242px;height:16px;line-height:16px;">Приходный кассовый ордер</div>
<div class="t" style="left:516px;top:320px;width:242px;height:16px;line-height:16px;">ООО &quot;Данго&quot; - Луневой Надежды</div>
<div class="t" style="left:762px;top:320px;width:243px;height:16px;line-height:16px;">ИП Совин Валерий Иванович</div>
<svg style="left:15px;top:337px" width="20" height="16" viewBox="0 0 20 16" shape-rendering="crispEdges"><g fill="none" stroke-width="1"><path d="M3 3.5h8M2.5 4v9M3 13.5h14M17.5 4v9" stroke="#a4a4a4"/><rect x="7" y="5" width="3" height="1" fill="#1838e0"/><rect x="7" y="7" width="4" height="1" fill="#98a8e8"/><rect x="7" y="9" width="7" height="1" fill="#98a8e8"/><rect x="7" y="11" width="8" height="1" fill="#8898e0"/><path d="M11.5 3.3L13.5 8" stroke="#0028e0" stroke-width="1.5" shape-rendering="auto"/><path d="M13.5 8L16.2 1.8" stroke="#1030e0" stroke-width="1.1" shape-rendering="auto"/><path d="M16.2 1.8L17.8 0" stroke="#a8a8ff" shape-rendering="auto"/></g></svg>
<div class="t" style="left:70px;top:337px;width:116px;height:16px;line-height:16px;">14.01.2011 5:21:00</div>
<div class="t" style="left:190px;top:337px;width:76px;height:16px;line-height:16px;">00000000002</div>
<div class="t" style="left:270px;top:337px;width:242px;height:16px;line-height:16px;">Перемещение товаров</div>
<div class="t" style="left:516px;top:337px;width:242px;height:16px;line-height:16px;">ООО &quot;Данго&quot; - Луневой Надежды</div>
<div class="t" style="left:762px;top:337px;width:243px;height:16px;line-height:16px;">Склад №2</div>
<svg style="left:15px;top:354px" width="20" height="16" viewBox="0 0 20 16" shape-rendering="crispEdges"><g fill="none" stroke-width="1"><path d="M3 3.5h8M2.5 4v9M3 13.5h14M17.5 4v9" stroke="#a4a4a4"/><rect x="7" y="5" width="3" height="1" fill="#1838e0"/><rect x="7" y="7" width="4" height="1" fill="#98a8e8"/><rect x="7" y="9" width="7" height="1" fill="#98a8e8"/><rect x="7" y="11" width="8" height="1" fill="#8898e0"/><path d="M11.5 3.3L13.5 8" stroke="#0028e0" stroke-width="1.5" shape-rendering="auto"/><path d="M13.5 8L16.2 1.8" stroke="#1030e0" stroke-width="1.1" shape-rendering="auto"/><path d="M16.2 1.8L17.8 0" stroke="#a8a8ff" shape-rendering="auto"/></g></svg>
<div class="t" style="left:70px;top:354px;width:116px;height:16px;line-height:16px;">14.01.2011 15:56:00</div>
<div class="t" style="left:190px;top:354px;width:76px;height:16px;line-height:16px;">00000000003</div>
<div class="t" style="left:270px;top:354px;width:242px;height:16px;line-height:16px;">Реализация товаров и услуг</div>
<div class="t" style="left:516px;top:354px;width:242px;height:16px;line-height:16px;">ООО &quot;Данго&quot; - Луневой Надежды</div>
<div class="t" style="left:762px;top:354px;width:243px;height:16px;line-height:16px;">Магазин &quot;Хомяк&quot;</div>
<svg style="left:15px;top:371px" width="20" height="16" viewBox="0 0 20 16" shape-rendering="crispEdges"><g fill="none" stroke-width="1"><path d="M3 3.5h8M2.5 4v9M3 13.5h14M17.5 4v9" stroke="#a4a4a4"/><rect x="7" y="5" width="3" height="1" fill="#1838e0"/><rect x="7" y="7" width="4" height="1" fill="#98a8e8"/><rect x="7" y="9" width="7" height="1" fill="#98a8e8"/><rect x="7" y="11" width="8" height="1" fill="#8898e0"/><path d="M11.5 3.3L13.5 8" stroke="#0028e0" stroke-width="1.5" shape-rendering="auto"/><path d="M13.5 8L16.2 1.8" stroke="#1030e0" stroke-width="1.1" shape-rendering="auto"/><path d="M16.2 1.8L17.8 0" stroke="#a8a8ff" shape-rendering="auto"/></g></svg>
<div class="t" style="left:70px;top:371px;width:116px;height:16px;line-height:16px;">14.01.2011 21:53:30</div>
<div class="t" style="left:190px;top:371px;width:76px;height:16px;line-height:16px;">00000000002</div>
<div class="t" style="left:270px;top:371px;width:242px;height:16px;line-height:16px;">Поступление на расчетный счет</div>
<div class="t" style="left:516px;top:371px;width:242px;height:16px;line-height:16px;">ООО &quot;Данго&quot; - Луневой Надежды</div>
<div class="t" style="left:762px;top:371px;width:243px;height:16px;line-height:16px;">Магазин &quot;Хомяк&quot;</div>
<svg style="left:15px;top:388px" width="20" height="16" viewBox="0 0 20 16" shape-rendering="crispEdges"><g fill="none" stroke-width="1"><path d="M3 3.5h8M2.5 4v9M3 13.5h14M17.5 4v9" stroke="#a4a4a4"/><rect x="7" y="5" width="3" height="1" fill="#1838e0"/><rect x="7" y="7" width="4" height="1" fill="#98a8e8"/><rect x="7" y="9" width="7" height="1" fill="#98a8e8"/><rect x="7" y="11" width="8" height="1" fill="#8898e0"/><path d="M11.5 3.3L13.5 8" stroke="#0028e0" stroke-width="1.5" shape-rendering="auto"/><path d="M13.5 8L16.2 1.8" stroke="#1030e0" stroke-width="1.1" shape-rendering="auto"/><path d="M16.2 1.8L17.8 0" stroke="#a8a8ff" shape-rendering="auto"/></g></svg>
<div class="t" style="left:70px;top:388px;width:116px;height:16px;line-height:16px;">14.01.2011 22:40:00</div>
<div class="t" style="left:190px;top:388px;width:76px;height:16px;line-height:16px;">00000000001</div>
<div class="t" style="left:270px;top:388px;width:242px;height:16px;line-height:16px;">Расходный кассовый ордер</div>
<div class="t" style="left:516px;top:388px;width:242px;height:16px;line-height:16px;">ООО &quot;Данго&quot; - Луневой Надежды</div>
<div class="t" style="left:762px;top:388px;width:243px;height:16px;line-height:16px;"></div>
<svg style="left:15px;top:405px" width="20" height="16" viewBox="0 0 20 16" shape-rendering="crispEdges"><g fill="none" stroke-width="1"><path d="M3 3.5h8M2.5 4v9M3 13.5h14M17.5 4v9" stroke="#a4a4a4"/><rect x="7" y="5" width="3" height="1" fill="#1838e0"/><rect x="7" y="7" width="4" height="1" fill="#98a8e8"/><rect x="7" y="9" width="7" height="1" fill="#98a8e8"/><rect x="7" y="11" width="8" height="1" fill="#8898e0"/><path d="M11.5 3.3L13.5 8" stroke="#0028e0" stroke-width="1.5" shape-rendering="auto"/><path d="M13.5 8L16.2 1.8" stroke="#1030e0" stroke-width="1.1" shape-rendering="auto"/><path d="M16.2 1.8L17.8 0" stroke="#a8a8ff" shape-rendering="auto"/></g></svg>
<div class="t" style="left:70px;top:405px;width:116px;height:16px;line-height:16px;">15.01.2011 13:00:00</div>
<div class="t" style="left:190px;top:405px;width:76px;height:16px;line-height:16px;">00000000004</div>
<div class="t" style="left:270px;top:405px;width:242px;height:16px;line-height:16px;">Поступление товаров и услуг</div>
<div class="t" style="left:516px;top:405px;width:242px;height:16px;line-height:16px;">ООО &quot;Данго&quot; - Луневой Надежды</div>
<div class="t" style="left:762px;top:405px;width:243px;height:16px;line-height:16px;">ООО &quot;Пекарь&quot;</div>
<svg style="left:15px;top:422px" width="20" height="16" viewBox="0 0 20 16" shape-rendering="crispEdges"><g fill="none" stroke-width="1"><path d="M3 3.5h8M2.5 4v9M3 13.5h14M17.5 4v9" stroke="#a4a4a4"/><rect x="7" y="5" width="3" height="1" fill="#1838e0"/><rect x="7" y="7" width="4" height="1" fill="#98a8e8"/><rect x="7" y="9" width="7" height="1" fill="#98a8e8"/><rect x="7" y="11" width="8" height="1" fill="#8898e0"/><path d="M11.5 3.3L13.5 8" stroke="#0028e0" stroke-width="1.5" shape-rendering="auto"/><path d="M13.5 8L16.2 1.8" stroke="#1030e0" stroke-width="1.1" shape-rendering="auto"/><path d="M16.2 1.8L17.8 0" stroke="#a8a8ff" shape-rendering="auto"/></g></svg>
<div class="t" style="left:70px;top:422px;width:116px;height:16px;line-height:16px;">15.01.2011 14:00:01</div>
<div class="t" style="left:190px;top:422px;width:76px;height:16px;line-height:16px;">00000000004</div>
<div class="t" style="left:270px;top:422px;width:242px;height:16px;line-height:16px;">Списание с расчетного счета</div>
<div class="t" style="left:516px;top:422px;width:242px;height:16px;line-height:16px;">ООО &quot;Данго&quot; - Луневой Надежды</div>
<div class="t" style="left:762px;top:422px;width:243px;height:16px;line-height:16px;">ООО &quot;Пекарь&quot;</div>
<svg style="left:15px;top:439px" width="20" height="16" viewBox="0 0 20 16" shape-rendering="crispEdges"><g fill="none" stroke-width="1"><path d="M3 3.5h8M2.5 4v9M3 13.5h14M17.5 4v9" stroke="#a4a4a4"/><rect x="7" y="5" width="3" height="1" fill="#1838e0"/><rect x="7" y="7" width="4" height="1" fill="#98a8e8"/><rect x="7" y="9" width="7" height="1" fill="#98a8e8"/><rect x="7" y="11" width="8" height="1" fill="#8898e0"/><path d="M11.5 3.3L13.5 8" stroke="#0028e0" stroke-width="1.5" shape-rendering="auto"/><path d="M13.5 8L16.2 1.8" stroke="#1030e0" stroke-width="1.1" shape-rendering="auto"/><path d="M16.2 1.8L17.8 0" stroke="#a8a8ff" shape-rendering="auto"/></g></svg>
<div class="t" style="left:70px;top:439px;width:116px;height:16px;line-height:16px;">15.01.2011 17:43:00</div>
<div class="t" style="left:190px;top:439px;width:76px;height:16px;line-height:16px;">00000000005</div>
<div class="t" style="left:270px;top:439px;width:242px;height:16px;line-height:16px;">Поступление товаров и услуг</div>
<div class="t" style="left:516px;top:439px;width:242px;height:16px;line-height:16px;">ООО &quot;Данго&quot; - Луневой Надежды</div>
<div class="t" style="left:762px;top:439px;width:243px;height:16px;line-height:16px;">ООО &quot;Сладость&quot;</div>
<svg style="left:15px;top:456px" width="20" height="16" viewBox="0 0 20 16" shape-rendering="crispEdges"><g fill="none" stroke-width="1"><path d="M3 3.5h8M2.5 4v9M3 13.5h14M17.5 4v9" stroke="#a4a4a4"/><rect x="7" y="5" width="3" height="1" fill="#1838e0"/><rect x="7" y="7" width="4" height="1" fill="#98a8e8"/><rect x="7" y="9" width="7" height="1" fill="#98a8e8"/><rect x="7" y="11" width="8" height="1" fill="#8898e0"/><path d="M11.5 3.3L13.5 8" stroke="#0028e0" stroke-width="1.5" shape-rendering="auto"/><path d="M13.5 8L16.2 1.8" stroke="#1030e0" stroke-width="1.1" shape-rendering="auto"/><path d="M16.2 1.8L17.8 0" stroke="#a8a8ff" shape-rendering="auto"/></g></svg>
<div class="t" style="left:70px;top:456px;width:116px;height:16px;line-height:16px;">15.01.2011 18:53:01</div>
<div class="t" style="left:190px;top:456px;width:76px;height:16px;line-height:16px;">00000000005</div>
<div class="t" style="left:270px;top:456px;width:242px;height:16px;line-height:16px;">Списание с расчетного счета</div>
<div class="t" style="left:516px;top:456px;width:242px;height:16px;line-height:16px;">ООО &quot;Данго&quot; - Луневой Надежды</div>
<div class="t" style="left:762px;top:456px;width:243px;height:16px;line-height:16px;">ООО &quot;Сладость&quot;</div>
<svg style="left:15px;top:473px" width="20" height="16" viewBox="0 0 20 16" shape-rendering="crispEdges"><g fill="none" stroke-width="1"><path d="M3 3.5h8M2.5 4v9M3 13.5h14M17.5 4v9" stroke="#a4a4a4"/><rect x="7" y="5" width="3" height="1" fill="#1838e0"/><rect x="7" y="7" width="4" height="1" fill="#98a8e8"/><rect x="7" y="9" width="7" height="1" fill="#98a8e8"/><rect x="7" y="11" width="8" height="1" fill="#8898e0"/><path d="M11.5 3.3L13.5 8" stroke="#0028e0" stroke-width="1.5" shape-rendering="auto"/><path d="M13.5 8L16.2 1.8" stroke="#1030e0" stroke-width="1.1" shape-rendering="auto"/><path d="M16.2 1.8L17.8 0" stroke="#a8a8ff" shape-rendering="auto"/></g></svg>
<div class="t" style="left:70px;top:473px;width:116px;height:16px;line-height:16px;">15.01.2011 20:00:00</div>
<div class="t" style="left:190px;top:473px;width:76px;height:16px;line-height:16px;">00000000003</div>
<div class="t" style="left:270px;top:473px;width:242px;height:16px;line-height:16px;">Перемещение товаров</div>
<div class="t" style="left:516px;top:473px;width:242px;height:16px;line-height:16px;">ООО &quot;Данго&quot; - Луневой Надежды</div>
<div class="t" style="left:762px;top:473px;width:243px;height:16px;line-height:16px;">Склад №3</div>
<svg style="left:15px;top:490px" width="20" height="16" viewBox="0 0 20 16" shape-rendering="crispEdges"><g fill="none" stroke-width="1"><path d="M3 3.5h8M2.5 4v9M3 13.5h14M17.5 4v9" stroke="#a4a4a4"/><rect x="7" y="5" width="3" height="1" fill="#1838e0"/><rect x="7" y="7" width="4" height="1" fill="#98a8e8"/><rect x="7" y="9" width="7" height="1" fill="#98a8e8"/><rect x="7" y="11" width="8" height="1" fill="#8898e0"/><path d="M11.5 3.3L13.5 8" stroke="#0028e0" stroke-width="1.5" shape-rendering="auto"/><path d="M13.5 8L16.2 1.8" stroke="#1030e0" stroke-width="1.1" shape-rendering="auto"/><path d="M16.2 1.8L17.8 0" stroke="#a8a8ff" shape-rendering="auto"/></g></svg>
<div class="t" style="left:70px;top:490px;width:116px;height:16px;line-height:16px;">16.01.2011 1:00:00</div>
<div class="t" style="left:190px;top:490px;width:76px;height:16px;line-height:16px;">00000000004</div>
<div class="t" style="left:270px;top:490px;width:242px;height:16px;line-height:16px;">Реализация товаров и услуг</div>
<div class="t" style="left:516px;top:490px;width:242px;height:16px;line-height:16px;">ООО &quot;Данго&quot; - Луневой Надежды</div>
<div class="t" style="left:762px;top:490px;width:243px;height:16px;line-height:16px;">Кафе &quot;Вечер&quot;</div>
<svg style="left:15px;top:507px" width="20" height="16" viewBox="0 0 20 16" shape-rendering="crispEdges"><g fill="none" stroke-width="1"><path d="M3 3.5h8M2.5 4v9M3 13.5h14M17.5 4v9" stroke="#a4a4a4"/><rect x="7" y="5" width="3" height="1" fill="#1838e0"/><rect x="7" y="7" width="4" height="1" fill="#98a8e8"/><rect x="7" y="9" width="7" height="1" fill="#98a8e8"/><rect x="7" y="11" width="8" height="1" fill="#8898e0"/><path d="M11.5 3.3L13.5 8" stroke="#0028e0" stroke-width="1.5" shape-rendering="auto"/><path d="M13.5 8L16.2 1.8" stroke="#1030e0" stroke-width="1.1" shape-rendering="auto"/><path d="M16.2 1.8L17.8 0" stroke="#a8a8ff" shape-rendering="auto"/></g></svg>
<div class="t" style="left:70px;top:507px;width:116px;height:16px;line-height:16px;">16.01.2011 2:00:00</div>
<div class="t" style="left:190px;top:507px;width:76px;height:16px;line-height:16px;">00000000003</div>
<div class="t" style="left:270px;top:507px;width:242px;height:16px;line-height:16px;">Поступление на расчетный счет</div>
<div class="t" style="left:516px;top:507px;width:242px;height:16px;line-height:16px;">ООО &quot;Данго&quot; - Луневой Надежды</div>
<div class="t" style="left:762px;top:507px;width:243px;height:16px;line-height:16px;">Кафе &quot;Вечер&quot;</div>
<svg style="left:15px;top:524px" width="20" height="16" viewBox="0 0 20 16" shape-rendering="crispEdges"><g fill="none" stroke-width="1"><path d="M3 3.5h8M2.5 4v9M3 13.5h14M17.5 4v9" stroke="#a4a4a4"/><rect x="7" y="5" width="3" height="1" fill="#1838e0"/><rect x="7" y="7" width="4" height="1" fill="#98a8e8"/><rect x="7" y="9" width="7" height="1" fill="#98a8e8"/><rect x="7" y="11" width="8" height="1" fill="#8898e0"/><path d="M11.5 3.3L13.5 8" stroke="#0028e0" stroke-width="1.5" shape-rendering="auto"/><path d="M13.5 8L16.2 1.8" stroke="#1030e0" stroke-width="1.1" shape-rendering="auto"/><path d="M16.2 1.8L17.8 0" stroke="#a8a8ff" shape-rendering="auto"/></g></svg>
<div class="t" style="left:70px;top:524px;width:116px;height:16px;line-height:16px;">16.01.2011 3:20:00</div>
<div class="t" style="left:190px;top:524px;width:76px;height:16px;line-height:16px;">00000000005</div>
<div class="t" style="left:270px;top:524px;width:242px;height:16px;line-height:16px;">Реализация товаров и услуг</div>
<div class="t" style="left:516px;top:524px;width:242px;height:16px;line-height:16px;">ООО &quot;Данго&quot; - Луневой Надежды</div>
<div class="t" style="left:762px;top:524px;width:243px;height:16px;line-height:16px;">Магазин &quot;Весна&quot;</div>
<svg style="left:15px;top:541px" width="20" height="16" viewBox="0 0 20 16" shape-rendering="crispEdges"><g fill="none" stroke-width="1"><path d="M3 3.5h8M2.5 4v9M3 13.5h14M17.5 4v9" stroke="#a4a4a4"/><rect x="7" y="5" width="3" height="1" fill="#1838e0"/><rect x="7" y="7" width="4" height="1" fill="#98a8e8"/><rect x="7" y="9" width="7" height="1" fill="#98a8e8"/><rect x="7" y="11" width="8" height="1" fill="#8898e0"/><path d="M11.5 3.3L13.5 8" stroke="#0028e0" stroke-width="1.5" shape-rendering="auto"/><path d="M13.5 8L16.2 1.8" stroke="#1030e0" stroke-width="1.1" shape-rendering="auto"/><path d="M16.2 1.8L17.8 0" stroke="#a8a8ff" shape-rendering="auto"/></g></svg>
<div class="t" style="left:70px;top:541px;width:116px;height:16px;line-height:16px;">16.01.2011 4:00:00</div>
<div class="t" style="left:190px;top:541px;width:76px;height:16px;line-height:16px;">00000000004</div>
<div class="t" style="left:270px;top:541px;width:242px;height:16px;line-height:16px;">Поступление на расчетный счет</div>
<div class="t" style="left:516px;top:541px;width:242px;height:16px;line-height:16px;">ООО &quot;Данго&quot; - Луневой Надежды</div>
<div class="t" style="left:762px;top:541px;width:243px;height:16px;line-height:16px;">Магазин &quot;Весна&quot;</div>
<svg style="left:15px;top:558px" width="20" height="16" viewBox="0 0 20 16" shape-rendering="crispEdges"><g fill="none" stroke-width="1"><path d="M3 3.5h8M2.5 4v9M3 13.5h14M17.5 4v9" stroke="#a4a4a4"/><rect x="7" y="5" width="3" height="1" fill="#1838e0"/><rect x="7" y="7" width="4" height="1" fill="#98a8e8"/><rect x="7" y="9" width="7" height="1" fill="#98a8e8"/><rect x="7" y="11" width="8" height="1" fill="#8898e0"/><path d="M11.5 3.3L13.5 8" stroke="#0028e0" stroke-width="1.5" shape-rendering="auto"/><path d="M13.5 8L16.2 1.8" stroke="#1030e0" stroke-width="1.1" shape-rendering="auto"/><path d="M16.2 1.8L17.8 0" stroke="#a8a8ff" shape-rendering="auto"/></g></svg>
<div class="t" style="left:70px;top:558px;width:116px;height:16px;line-height:16px;">17.01.2011 1:00:00</div>
<div class="t" style="left:190px;top:558px;width:76px;height:16px;line-height:16px;">00000000006</div>
<div class="t" style="left:270px;top:558px;width:242px;height:16px;line-height:16px;">Реализация товаров и услуг</div>
<div class="t" style="left:516px;top:558px;width:242px;height:16px;line-height:16px;">ООО &quot;Данго&quot; - Луневой Надежды</div>
<div class="t" style="left:762px;top:558px;width:243px;height:16px;line-height:16px;">Кафе &quot;Толстяк&quot;</div>
<div style="left:1008px;top:85px;width:11px;height:11px;background:#ebe5da;box-sizing:border-box;border:1px solid #c9c5b5;"></div>
<svg style="left:1008px;top:85px" width="11" height="11" viewBox="0 0 11 11" shape-rendering="crispEdges"><path d="M2 7l3.5-3.5 3.5 3.5" stroke="#000" stroke-width="1.15" fill="none" shape-rendering="auto"/></svg>
<div style="left:1008px;top:323px;width:11px;height:11px;background:#ebe5da;box-sizing:border-box;border:1px solid #c9c5b5;"></div>
<div style="left:1008px;top:562px;width:11px;height:11px;background:#ebe5da;box-sizing:border-box;border:1px solid #c9c5b5;"></div>
<svg style="left:1008px;top:562px" width="11" height="11" viewBox="0 0 11 11" shape-rendering="crispEdges"><path d="M2 4l3.5 3.5 3.5-3.5" stroke="#000" stroke-width="1.15" fill="none" shape-rendering="auto"/></svg>
<div style="left:14px;top:581px;width:1007px;height:110px;background:#ffffff;"></div>
<div style="left:15px;top:582px;width:991px;height:44px;background:#ebe5da;"></div>
<div style="left:75px;top:582px;width:99px;height:14px;background:#c9c1b5;"></div>
<div style="left:1006px;top:582px;width:14px;height:108px;background:#fdfbf3;"></div>
<div style="left:46px;top:582px;width:1px;height:95px;background:#8f897b;"></div>
<div style="left:74px;top:582px;width:1px;height:95px;background:#8f897b;"></div>
<div style="left:174px;top:582px;width:1px;height:95px;background:#8f897b;"></div>
<div style="left:338px;top:582px;width:1px;height:95px;background:#8f897b;"></div>
<div style="left:458px;top:582px;width:1px;height:95px;background:#8f897b;"></div>
<div style="left:558px;top:582px;width:1px;height:95px;background:#8f897b;"></div>
<div style="left:722px;top:582px;width:1px;height:95px;background:#8f897b;"></div>
<div style="left:842px;top:582px;width:1px;height:95px;background:#8f897b;"></div>
<div style="left:74px;top:596px;width:932px;height:1px;background:#8f897b;"></div>
<div style="left:174px;top:611px;width:164px;height:1px;background:#8f897b;"></div>
<div style="left:338px;top:611px;width:120px;height:1px;background:#8f897b;"></div>
<div style="left:558px;top:611px;width:164px;height:1px;background:#8f897b;"></div>
<div style="left:722px;top:611px;width:120px;height:1px;background:#8f897b;"></div>
<div style="left:14px;top:626px;width:992px;height:1px;background:#8f897b;"></div>
<div style="left:174px;top:643px;width:164px;height:1px;background:#8f897b;"></div>
<div style="left:338px;top:643px;width:120px;height:1px;background:#8f897b;"></div>
<div style="left:74px;top:643px;width:100px;height:1px;background:#8f897b;"></div>
<div style="left:458px;top:643px;width:100px;height:1px;background:#8f897b;"></div>
<div style="left:558px;top:643px;width:164px;height:1px;background:#8f897b;"></div>
<div style="left:722px;top:643px;width:120px;height:1px;background:#8f897b;"></div>
<div style="left:842px;top:643px;width:164px;height:1px;background:#8f897b;"></div>
<div style="left:174px;top:660px;width:164px;height:1px;background:#8f897b;"></div>
<div style="left:338px;top:660px;width:120px;height:1px;background:#8f897b;"></div>
<div style="left:558px;top:660px;width:164px;height:1px;background:#8f897b;"></div>
<div style="left:722px;top:660px;width:120px;height:1px;background:#8f897b;"></div>
<div style="left:14px;top:677px;width:992px;height:1px;background:#8f897b;"></div>
<div style="left:14px;top:581px;width:1007px;height:1px;background:#8f897b;"></div>
<div style="left:14px;top:690px;width:1007px;height:1px;background:#8f897b;"></div>
<div style="left:14px;top:581px;width:1px;height:110px;background:#8f897b;"></div>
<div style="left:1020px;top:581px;width:1px;height:110px;background:#8f897b;"></div>
<div class="t" style="left:48px;top:581px;height:15px;line-height:15px;">N</div>
<svg style="left:62px;top:602px" width="5" height="3" viewBox="0 0 5 3" shape-rendering="crispEdges"><path d="M0 0h5v1h-1v1h-1v1h-1v-1h-1v-1h-1z" fill="#000"/></svg>
<div class="t" style="left:76px;top:581px;height:15px;line-height:15px;font-weight:bold;letter-spacing:0.8px;">Счет Дт</div>
<div class="t" style="left:76px;top:597px;width:97px;height:15px;line-height:15px;overflow:hidden;">Подразделение Дт</div>
<div class="t" style="left:176px;top:581px;height:15px;line-height:15px;">Субконто Дт</div>
<div class="t" style="left:340px;top:581px;height:15px;line-height:15px;">Количество Дт</div>
<div class="t" style="left:340px;top:596px;height:15px;line-height:15px;">Валюта Дт</div>
<div class="t" style="left:340px;top:611px;height:15px;line-height:15px;">Вал. сумма Дт</div>
<div class="t" style="left:460px;top:581px;height:15px;line-height:15px;font-weight:bold;letter-spacing:0.8px;">Счет Кт</div>
<div class="t" style="left:460px;top:597px;width:97px;height:15px;line-height:15px;overflow:hidden;">Подразделение Кт</div>
<div class="t" style="left:560px;top:581px;height:15px;line-height:15px;">Субконто Кт</div>
<div class="t" style="left:724px;top:581px;height:15px;line-height:15px;">Количество Кт</div>
<div class="t" style="left:724px;top:596px;height:15px;line-height:15px;">Валюта Кт</div>
<div class="t" style="left:724px;top:611px;height:15px;line-height:15px;">Вал. сумма Кт</div>
<div class="t" style="left:844px;top:581px;height:15px;line-height:15px;font-weight:bold;letter-spacing:0.8px;">Сумма</div>
<div class="t" style="left:844px;top:597px;height:15px;line-height:15px;">Содержание</div>
<div style="left:75px;top:627px;width:99px;height:16px;background:#000080;"></div>
<div class="t" style="left:68px;top:627px;width:5px;height:16px;line-height:16px;text-align:right;">1</div>
<div class="t" style="left:77px;top:627px;height:16px;line-height:16px;font-weight:bold;letter-spacing:0.8px;color:#fff;">60.01</div>
<div class="t" style="left:176px;top:627px;height:16px;line-height:16px;">ЗАО &quot;Солнце&quot;</div>
<div class="t" style="left:176px;top:644px;height:16px;line-height:16px;">Основной договор</div>
<div class="t" style="left:176px;top:661px;height:16px;line-height:16px;">Поступление товаров и услуг...</div>
<div class="t" style="left:460px;top:627px;height:16px;line-height:16px;font-weight:bold;letter-spacing:0.8px;">51</div>
<div class="t" style="left:560px;top:627px;height:16px;line-height:16px;">АКБ &quot;АВАНГАРД&quot; (Расчетный)</div>
<div class="t" style="left:560px;top:644px;height:16px;line-height:16px;">Оплата товаров, работ, услуг...</div>
<div class="t" style="left:844px;top:627px;width:162px;height:16px;line-height:16px;font-weight:bold;letter-spacing:0.8px;text-align:right;">2 961,80</div>
<div class="t" style="left:848px;top:644px;height:16px;line-height:16px;">по вх.д.3 от 12.01.2011</div>
<div style="left:1008px;top:583px;width:11px;height:11px;background:#ebe5da;box-sizing:border-box;border:1px solid #c9c5b5;"></div>
<svg style="left:1008px;top:583px" width="11" height="11" viewBox="0 0 11 11" shape-rendering="crispEdges"><path d="M2 7l3.5-3.5 3.5 3.5" stroke="#000" stroke-width="1.15" fill="none" shape-rendering="auto"/></svg>
<div style="left:1008px;top:630px;width:11px;height:11px;background:#ebe5da;box-sizing:border-box;border:1px solid #c9c5b5;"></div>
<div style="left:1008px;top:678px;width:11px;height:11px;background:#ebe5da;box-sizing:border-box;border:1px solid #c9c5b5;"></div>
<svg style="left:1008px;top:678px" width="11" height="11" viewBox="0 0 11 11" shape-rendering="crispEdges"><path d="M2 4l3.5 3.5 3.5-3.5" stroke="#000" stroke-width="1.15" fill="none" shape-rendering="auto"/></svg>
<svg style="left:14px;top:625px" width="20" height="20" viewBox="0 0 20 20" shape-rendering="crispEdges"><rect x="5" y="3" width="5" height="1" fill="#0a88e0"/><rect x="5" y="3" width="2" height="4" fill="#0a88e0"/><rect x="4" y="7" width="2" height="1" fill="#0a88e0"/><rect x="8" y="3" width="2" height="5" fill="#0a88e0"/><rect x="3" y="8" width="7" height="1" fill="#0a88e0"/><rect x="3" y="9" width="1" height="1" fill="#0a88e0"/><rect x="9" y="9" width="1" height="1" fill="#0a88e0"/><rect x="10" y="5" width="4" height="1" fill="#0a88e0"/><rect x="11" y="5" width="2" height="4" fill="#0a88e0"/><rect x="8" y="11" width="2" height="6" fill="#ff3030"/><rect x="12" y="11" width="2" height="1" fill="#ff3030"/><rect x="11" y="12" width="1" height="1" fill="#ff3030"/><rect x="10" y="13" width="1" height="2" fill="#ff3030"/><rect x="11" y="15" width="1" height="1" fill="#ff3030"/><rect x="12" y="16" width="2" height="1" fill="#ff3030"/><rect x="14" y="13" width="4" height="1" fill="#ff3030"/><rect x="15" y="13" width="2" height="4" fill="#ff3030"/></svg>
</body></html>
